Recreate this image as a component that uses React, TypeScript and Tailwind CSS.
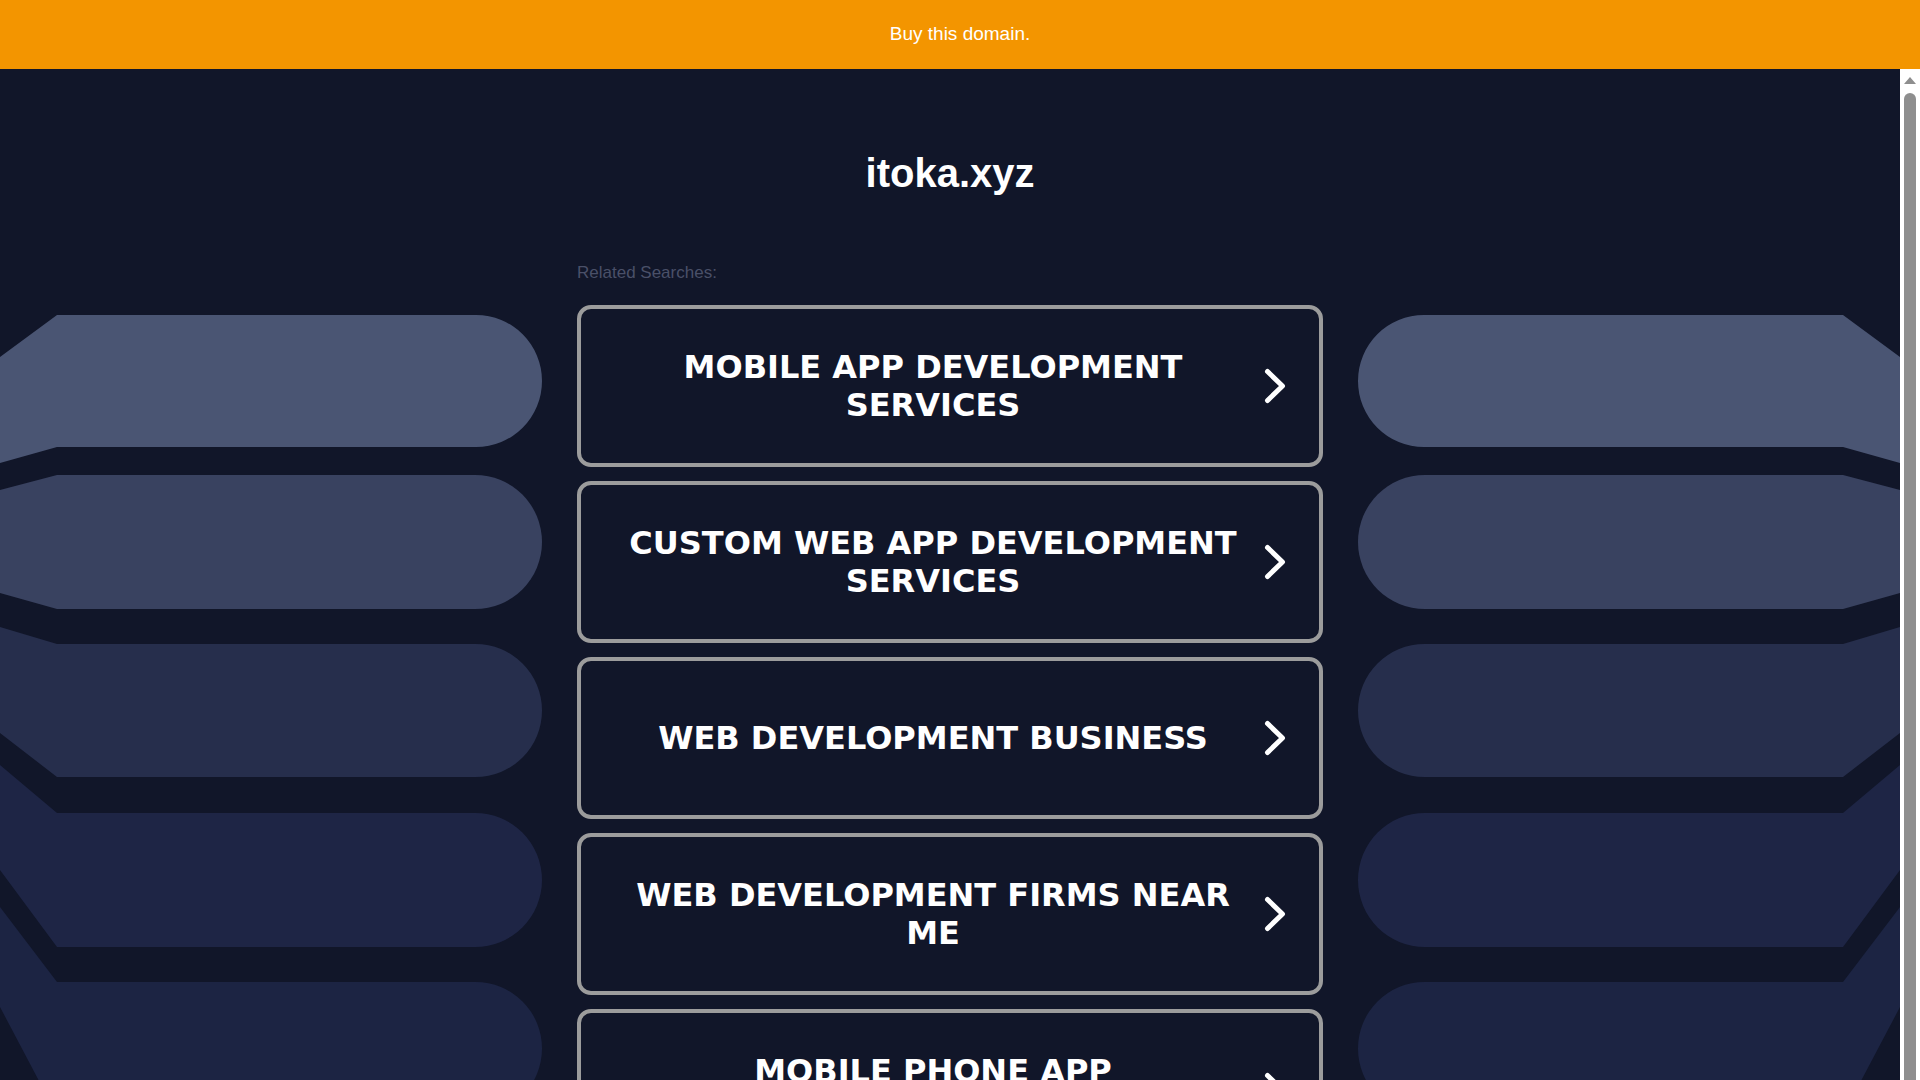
const searches = [
  'Mobile App Development Services',
  'Custom Web App Development Services',
  'Web Development Business',
  'Web Development Firms Near Me',
  'Mobile Phone App Development',
];

// shape rows for the side decoration: straight edge top/bottom, and where the angled end meets x=0
const bands = [
  { top: 0, bottom: 132, topL: 42, bottomL: 148, fill: '#4a5573' },
  { top: 160, bottom: 294, topL: 175, bottomL: 278, fill: '#394260' },
  { top: 329, bottom: 462, topL: 312, bottomL: 418, fill: '#262e4c' },
  { top: 498, bottom: 632, topL: 450, bottomL: 555, fill: '#1e2545' },
  { top: 667, bottom: 800, topL: 592, bottomL: 692, fill: '#1c2443' },
];

function SideShapes({ flip }: { flip?: boolean }) {
  return (
    <svg
      width="542"
      height="800"
      viewBox="0 0 542 800"
      className={flip ? '-scale-x-100 block' : 'block'}
    >
      {bands.map((b) => {
        const r = (b.bottom - b.top) / 2;
        return (
          <path
            key={b.top}
            fill={b.fill}
            d={`M57 ${b.top} H${542 - r} A${r} ${r} 0 0 1 ${542 - r} ${b.bottom} H57 L0 ${b.bottomL} V${b.topL} Z`}
          />
        );
      })}
    </svg>
  );
}

function Chevron() {
  return (
    <svg width="24" height="38" viewBox="0 0 24 38" className="shrink-0">
      <path
        d="M4.5 4.5 L19.5 19 L4.5 33.5"
        fill="none"
        stroke="white"
        strokeWidth="5"
        strokeLinecap="round"
        strokeLinejoin="round"
      />
    </svg>
  );
}

function SearchCard({ label }: { label: string }) {
  return (
    <a
      href="#"
      className="flex items-center gap-[14px] h-[162px] pl-[36px] pr-[32px] border-4 border-[#9c9c9c] rounded-[14px] bg-[#111629]"
    >
      <span className="flex-1 text-center uppercase text-white font-bold text-[32px] leading-[38px] font-['DejaVu_Sans',Verdana,sans-serif]">
        {label}
      </span>
      <Chevron />
    </a>
  );
}

function Scrollbar() {
  return (
    <div className="w-[20px] shrink-0 bg-white flex flex-col items-center pt-[8px]">
      <div className="w-0 h-0 border-x-[6px] border-x-transparent border-b-[7px] border-b-[#8e8e8e]" />
      <div className="mt-[9px] w-[12px] flex-1 rounded-t-full bg-[#8e8e8e]" />
    </div>
  );
}

export default function App() {
  return (
    <div className="h-screen flex flex-col overflow-hidden font-['Liberation_Sans',Arial,sans-serif]">
      <div className="h-[69px] shrink-0 bg-[#f39500] flex items-center justify-center text-white text-[19px]">
        Buy this domain.
      </div>

      <div className="flex-1 flex min-h-0">
        <div className="flex-1 overflow-hidden bg-[#111629]">
          <div className="grid grid-cols-[1fr_746px_1fr] gap-x-[35px] pb-[60px]">
            <div className="pt-[246px] overflow-hidden">
              <SideShapes />
            </div>

            <div className="pt-[80px]">
              <h1 className="text-center text-white font-bold text-[40px] leading-[48px]">itoka.xyz</h1>
              <p className="mt-[66px] mb-[22px] text-[17px] leading-[20px] text-[#4a5068]">Related Searches:</p>
              <div className="flex flex-col gap-[14px]">
                {searches.map((s) => (
                  <SearchCard key={s} label={s} />
                ))}
              </div>
            </div>

            <div className="pt-[246px] overflow-hidden">
              <SideShapes flip />
            </div>
          </div>
        </div>
        <Scrollbar />
      </div>
    </div>
  );
}
